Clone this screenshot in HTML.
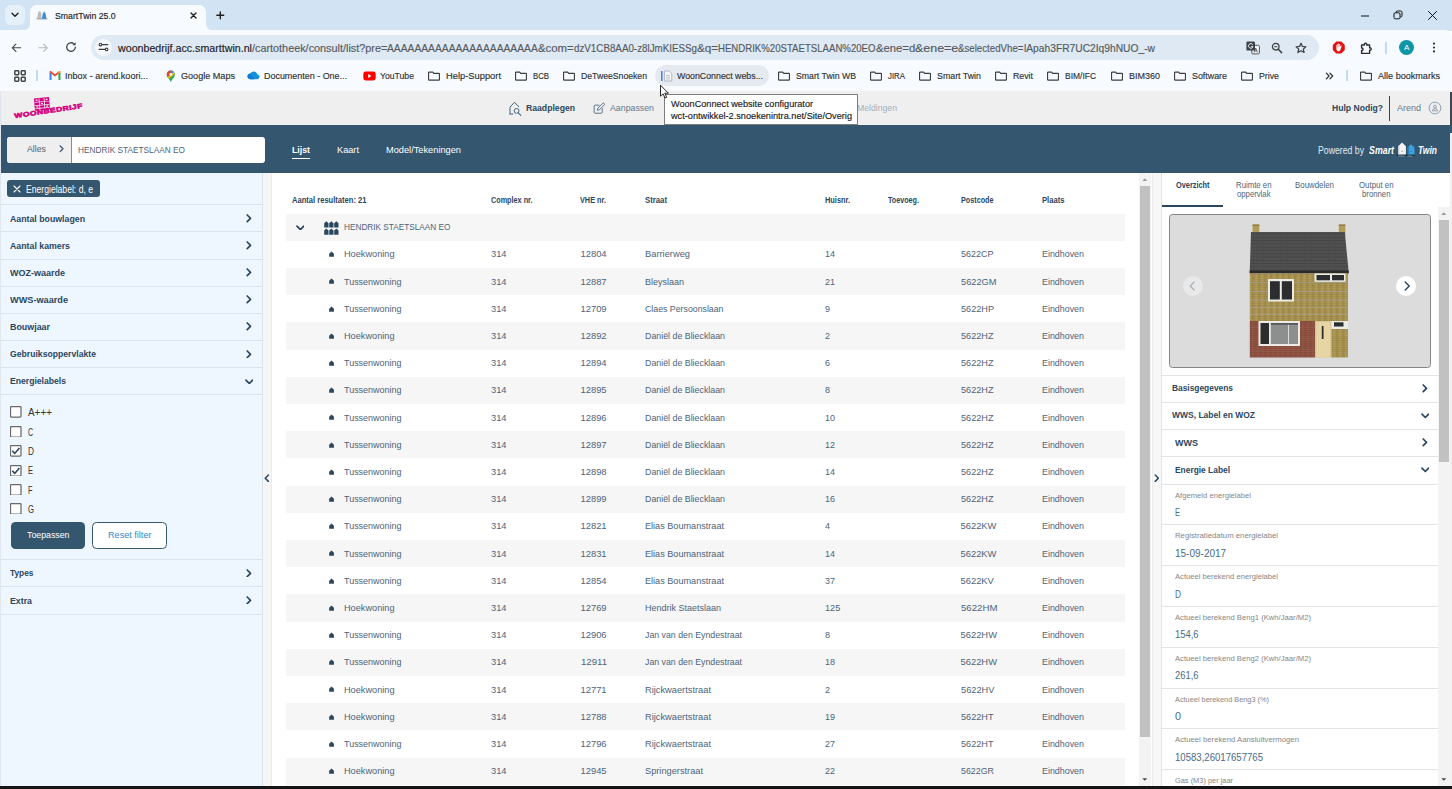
<!DOCTYPE html>
<html lang="nl"><head><meta charset="utf-8"><title>SmartTwin 25.0</title>
<style>
*{box-sizing:border-box}
html,body{margin:0;padding:0}
body{width:1452px;height:789px;overflow:hidden;position:relative;background:#fff;font-family:"Liberation Sans",sans-serif;}
.g{position:absolute;left:0;top:0;width:0;height:0}
.b{position:absolute;display:block}
.t{position:absolute;display:block;white-space:pre;transform-origin:0 50%}

</style></head>
<body>
<div class="g" id="chrome"><div class="b" style="left:0px;top:0px;width:1452px;height:31px;background:#d2e4f3;"></div><div class="b" style="left:5px;top:5px;width:20px;height:20px;background:#e5f0fb;border-radius:6px;"></div><svg class="b" style="left:10px;top:11px;" width="10" height="8" viewBox="0 0 10 8"><path d="M2 2.2l3 3 3-3" fill="none" stroke="#1f1f1f" stroke-width="1.4" stroke-linecap="round" stroke-linejoin="round"/></svg><div class="b" style="left:30px;top:4.6px;width:175.5px;height:26.4px;background:#f7fafe;border-radius:7px 7px 0 0;"></div><svg class="b" style="left:24px;top:24.2px;" width="6" height="6" viewBox="0 0 6 6"><path d="M6 0v6H0c3.3 0 6-2.7 6-6z" fill="#f7fafe"/></svg><svg class="b" style="left:205.5px;top:24.2px;" width="6" height="6" viewBox="0 0 6 6"><path d="M0 0v6h6C2.7 6 0 3.3 0 0z" fill="#f7fafe"/></svg><svg class="b" style="left:36px;top:10px;" width="12" height="10" viewBox="0 0 12 10"><path d="M1 9l1.2-6.5L3.6 1 5 2.5 5.6 9z" fill="#b9bdc2"/><path d="M5.8 9l1-5.6L8.2 1.6l1.3 1.8L10.6 9z" fill="#3d8fd1"/><path d="M.5 9h11" stroke="#8a8f96" stroke-width=".7"/></svg><span class="t" style="left:54.5px;top:10px;font-size:9.4px;line-height:12.2px;color:#202124;transform:scaleX(0.9318);-webkit-text-stroke:.15px;">SmartTwin 25.0</span><svg class="b" style="left:190px;top:12.2px;" width="7" height="7" viewBox="0 0 7 7"><path d="M1 1l5 5M6 1L1 6" stroke="#1f1f1f" stroke-width="1.4" stroke-linecap="round"/></svg><svg class="b" style="left:216.3px;top:11.1px;" width="8.6" height="8.6" viewBox="0 0 10 10"><path d="M5 1v8M1 5h8" stroke="#1f1f1f" stroke-width="1.600" stroke-linecap="round"/></svg><svg class="b" style="left:1360px;top:11px;" width="10" height="10" viewBox="0 0 10 10"><path d="M1 5h8" stroke="#111" stroke-width="1"/></svg><svg class="b" style="left:1393px;top:10px;" width="10" height="10" viewBox="0 0 10 10"><rect x="1" y="2.8" width="6" height="6" rx="1.2" fill="none" stroke="#111" stroke-width="1"/><path d="M3 2.6V2.2c0-.7.5-1.2 1.2-1.2h3.6c.7 0 1.2.5 1.2 1.2v3.6c0 .7-.5 1.2-1.2 1.2h-.4" fill="none" stroke="#111" stroke-width="1"/></svg><svg class="b" style="left:1427px;top:10px;" width="11" height="11" viewBox="0 0 11 11"><path d="M1.2 1.2l8.6 8.6M9.8 1.2L1.2 9.8" stroke="#111" stroke-width="1"/></svg><div class="b" style="left:0px;top:30.2px;width:1452px;height:60.8px;background:#f7fafe;border-radius:0 7px 0 0;"></div><svg class="b" style="left:11.3px;top:42.7px;" width="10.5" height="9.6" viewBox="0 0 12 11"><path d="M11 5.5H1.6M5.6 1.3L1.4 5.5l4.2 4.2" fill="none" stroke="#444746" stroke-width="1.3" stroke-linecap="round" stroke-linejoin="round"/></svg><svg class="b" style="left:38.3px;top:42.7px;" width="10.5" height="9.6" viewBox="0 0 12 11"><path d="M1 5.5h9.4M6.4 1.3l4.2 4.2-4.2 4.2" fill="none" stroke="#b4b8bd" stroke-width="1.3" stroke-linecap="round" stroke-linejoin="round"/></svg><svg class="b" style="left:65px;top:41px;" width="12" height="12" viewBox="0 0 12 12"><path d="M10.3 6.2a4.3 4.3 0 1 1-1.4-3.3" fill="none" stroke="#444746" stroke-width="1.3" stroke-linecap="round"/><path d="M10.6 1.2v3.1H7.5z" fill="#444746"/></svg><div class="b" style="left:91px;top:35px;width:1228px;height:25.299999999999997px;background:#dfe9f3;border-radius:12.6px;"></div><div class="b" style="left:94.6px;top:39px;width:17.60000000000001px;height:17.4px;background:#f5f9fd;border-radius:9px;"></div><svg class="b" style="left:98px;top:42px;" width="11" height="10" viewBox="0 0 11 10"><path d="M4.2 2.6h5.6M1.2 7.4h5.6" stroke="#3c4043" stroke-width="1.2" stroke-linecap="round"/><circle cx="2.4" cy="2.6" r="1.3" fill="none" stroke="#3c4043" stroke-width="1.1"/><circle cx="8.6" cy="7.4" r="1.3" fill="none" stroke="#3c4043" stroke-width="1.1"/></svg><span class="t" style="left:118px;top:42px;font-size:10.6px;line-height:13.8px;color:#202124;transform:scaleX(1.0069);-webkit-text-stroke:.15px;">woonbedrijf.acc.smarttwin.nl</span><span class="t" style="left:252px;top:42px;font-size:10.6px;line-height:13.8px;color:#54595f;transform:scaleX(1.0230);-webkit-text-stroke:.15px;">/cartotheek/consult/list?pre=</span><span class="t" style="left:387.25px;top:42px;font-size:10.6px;line-height:13.8px;color:#54595f;transform:scaleX(0.9697);-webkit-text-stroke:.15px;">AAAAAAAAAAAAAAAAAAAAAA</span><span class="t" style="left:538px;top:42px;font-size:10.6px;line-height:13.8px;color:#54595f;transform:scaleX(1.0742);-webkit-text-stroke:.15px;">&amp;com=</span><span class="t" style="left:573.75px;top:42px;font-size:10.6px;line-height:13.8px;color:#54595f;transform:scaleX(0.9243);-webkit-text-stroke:.15px;">dzV1CB8AA0-z8lJmKIESSg</span><span class="t" style="left:696.75px;top:42px;font-size:10.6px;line-height:13.8px;color:#54595f;transform:scaleX(1.1093);-webkit-text-stroke:.15px;">&amp;q=</span><span class="t" style="left:718px;top:42px;font-size:10.6px;line-height:13.8px;color:#54595f;transform:scaleX(0.9079);-webkit-text-stroke:.15px;">HENDRIK%20STAETSLAAN%20EO</span><span class="t" style="left:875.5px;top:42px;font-size:10.6px;line-height:13.8px;color:#54595f;transform:scaleX(1.0658);-webkit-text-stroke:.15px;">&amp;ene=d</span><span class="t" style="left:914.75px;top:42px;font-size:10.6px;line-height:13.8px;color:#54595f;transform:scaleX(1.1744);-webkit-text-stroke:.15px;">&amp;ene=e</span><span class="t" style="left:958px;top:42px;font-size:10.6px;line-height:13.8px;color:#54595f;transform:scaleX(0.9153);-webkit-text-stroke:.15px;">&amp;selectedVhe=</span><span class="t" style="left:1023.5px;top:42px;font-size:10.6px;line-height:13.8px;color:#54595f;transform:scaleX(0.9672);-webkit-text-stroke:.15px;">lApah3FR7UC2Iq9hNUO_-w</span><svg class="b" style="left:1246px;top:41px;" width="14" height="13.5" viewBox="0 0 14 13.500"><rect x="5.800" y="4.300" width="7.600" height="8.600" rx="1" fill="#f2f6fb" stroke="#50555b" stroke-width="1"/><path d="M8 11.300l1.700-4.300 1.700 4.300M8.600 10h2.200" stroke="#50555b" stroke-width=".9" fill="none"/><rect x=".4" y=".4" width="8.600" height="9.200" rx="1.200" fill="#3f4347"/><path d="M6.700 3.600a2.300 2.300 0 1 0 .3 2.100H4.900" stroke="#e8edf4" stroke-width="1" fill="none"/></svg><svg class="b" style="left:1271px;top:42px;" width="12" height="12" viewBox="0 0 12 12"><circle cx="4.700" cy="4.700" r="3.300" fill="none" stroke="#3c4043" stroke-width="1.300"/><path d="M7.300 7.300l3.300 3.300" stroke="#3c4043" stroke-width="1.500" stroke-linecap="round"/><path d="M3.200 4.700h3" stroke="#3c4043" stroke-width="1"/></svg><svg class="b" style="left:1295px;top:42px;" width="12" height="11.5" viewBox="0 0 14 13"><path d="M7 1.300l1.700 3.700 4 .4-3 2.700.9 3.900L7 10l-3.600 2 .9-3.900-3-2.700 4-.4z" fill="none" stroke="#3c4043" stroke-width="1.500" stroke-linejoin="round"/></svg><svg class="b" style="left:1332px;top:41px;" width="13.6" height="13" viewBox="0 0 15 15"><path d="M4.600 .6h5.800l4 4v5.800l-4 4H4.600l-4-4V4.600z" fill="#e3120f"/><path d="M4.700 8.600V5c0-.8 1.100-.8 1.100 0V3.800c0-.8 1.100-.8 1.100 0V3.400c0-.8 1.100-.8 1.100 0v.6c0-.8 1.100-.8 1.100 0v2.400l.7-.9c.5-.6 1.300 0 .9.700L9.600 9.400c-.5 1.600-1.200 2.500-2.500 2.500-1.500 0-2.400-1.200-2.400-3.300z" fill="#fff"/><path d="M5.800 5v2.400M6.900 4v3.300M8 4v3.300" stroke="#e3120f" stroke-width=".35"/></svg><svg class="b" style="left:1359.5px;top:40.5px;" width="14" height="13.5" viewBox="0 0 14 13.500"><path d="M1.600 4h2.800c-.7-2.300 2.900-2.300 2.200 0h3v2.900c2.100-.7 2.100 2.900 0 2.200v3.300H1.600V9.400c1.900.5 1.900-2.900 0-2.400z" fill="none" stroke="#2b2d30" stroke-width="1.400" stroke-linejoin="round"/></svg><div class="b" style="left:1385.3px;top:42px;width:1.7000000000000455px;height:11.5px;background:#c2dbf5;"></div><div class="b" style="left:1399px;top:40px;width:15px;height:15px;background:#0e95a6;border-radius:50%;"></div><span class="t" style="left:1404px;top:43px;font-size:7.8px;line-height:10.1px;color:#fff;transform:scaleX(1.0378);">A</span><svg class="b" style="left:1432px;top:42px;" width="4" height="11" viewBox="0 0 4 11"><circle cx="2" cy="1.600" r="1.100" fill="#333"/><circle cx="2" cy="5.500" r="1.100" fill="#333"/><circle cx="2" cy="9.400" r="1.100" fill="#333"/></svg><svg class="b" style="left:14px;top:70px;" width="12" height="12" viewBox="0 0 12 12"><g fill="none" stroke="#444746" stroke-width="1.500"><rect x=".8" y=".8" width="3.900" height="3.900" rx=".6"/><rect x="7.300" y=".8" width="3.900" height="3.900" rx=".6"/><rect x=".8" y="7.300" width="3.900" height="3.900" rx=".6"/><rect x="7.300" y="7.300" width="3.900" height="3.900" rx=".6"/></g></svg><div class="b" style="left:36.3px;top:69.8px;width:1.7000000000000028px;height:11.200000000000003px;background:#c2dbf5;"></div><svg class="b" style="left:49px;top:71px;" width="12" height="9" viewBox="0 0 12 9"><path d="M.5 9V1.200L2.600 2.600V9z" fill="#4285f4"/><path d="M11.500 9V1.200L9.400 2.600V9z" fill="#34a853"/><path d="M.5 1.200C.5 .2 1.600-.2 2.400.4L6 3.200 9.600.4c.8-.6 1.900-.2 1.900.8L6 5.600z" fill="#ea4335"/><path d="M9.400 2.600l2.100-1.400c0-1-1.100-1.400-1.900-.8z" fill="#fbbc04"/></svg><svg class="b" style="left:166px;top:69.8px;" width="9.6" height="12.4" viewBox="0 0 10 13"><path d="M5 .5C2.500.5.700 2.300.700 4.700c0 2.900 3.200 5 4.300 7.800 1.100-2.800 4.300-4.900 4.300-7.800C9.300 2.300 7.500.5 5 .5z" fill="#34a853"/><path d="M5 .5C2.500.5.700 2.300.700 4.700c0 1 .4 1.900 1 2.800L5 4.700z" fill="#ea4335"/><path d="M5 .5v4.200l3.300-2.600C7.500 1.100 6.400.5 5 .5z" fill="#4285f4"/><path d="M8.300 2.100L1.700 7.500c.4.600.8 1.100 1.300 1.700l5.900-5c-.1-.8-.3-1.500-.6-2.100z" fill="#fbbc04"/><circle cx="5" cy="4.600" r="1.500" fill="#fff"/></svg><svg class="b" style="left:246.8px;top:71.2px;" width="13" height="8.6" viewBox="0 0 15 10"><path d="M3.400 9.500h8.200c1.600 0 2.900-1.200 2.900-2.700 0-1.400-1.100-2.600-2.500-2.700C11.600 2 9.800.5 7.700.5 6 .5 4.600 1.400 3.900 2.800 2 2.900.5 4.400.5 6.200c0 1.800 1.300 3.300 2.900 3.300z" fill="#1490df"/><path d="M3.900 2.800C2 2.900.5 4.400.5 6.200c0 1.800 1.300 3.300 2.900 3.300h5L3.900 2.800z" fill="#0f78d4"/></svg><svg class="b" style="left:363px;top:71px;" width="13" height="10" viewBox="0 0 13 10"><rect x=".3" y=".5" width="12.400" height="9" rx="2.400" fill="#f00"/><path d="M5.200 3l3.200 2-3.200 2z" fill="#fff"/></svg><div class="b" style="left:655px;top:65px;width:114px;height:21px;background:#e5eaf1;border-radius:10.5px;"></div><svg class="b" style="left:661px;top:70px;" width="12" height="12" viewBox="0 0 12 12"><path d="M.8 1v10" stroke="#3b78d8" stroke-width="1.400"/><path d="M3.400 1h4.800l2.600 2.600V11H3.400z" fill="#f4f6f8" stroke="#aab0b8" stroke-width=".9"/><path d="M5 5.400h4M5 7.200h4M5 9h4" stroke="#b8bec6" stroke-width=".8"/></svg><span class="t" style="left:677px;top:70px;font-size:9.4px;line-height:12.2px;color:#2f3236;transform:scaleX(0.9394);-webkit-text-stroke:.15px;">WoonConnect webs...</span><span class="t" style="left:65px;top:70px;font-size:9.4px;line-height:12.2px;color:#2f3236;transform:scaleX(0.9653);-webkit-text-stroke:.15px;">Inbox - arend.koori...</span><span class="t" style="left:181px;top:70px;font-size:9.4px;line-height:12.2px;color:#2f3236;transform:scaleX(0.9683);-webkit-text-stroke:.15px;">Google Maps</span><span class="t" style="left:264px;top:70px;font-size:9.4px;line-height:12.2px;color:#2f3236;transform:scaleX(0.9537);-webkit-text-stroke:.15px;">Documenten - One...</span><span class="t" style="left:380px;top:70px;font-size:9.4px;line-height:12.2px;color:#2f3236;transform:scaleX(0.9228);-webkit-text-stroke:.15px;">YouTube</span><span class="t" style="left:446px;top:70px;font-size:9.4px;line-height:12.2px;color:#2f3236;transform:scaleX(0.9955);-webkit-text-stroke:.15px;">Help-Support</span><span class="t" style="left:533px;top:70px;font-size:9.4px;line-height:12.2px;color:#2f3236;transform:scaleX(0.8298);-webkit-text-stroke:.15px;">BCB</span><span class="t" style="left:581px;top:70px;font-size:9.4px;line-height:12.2px;color:#2f3236;transform:scaleX(0.9243);-webkit-text-stroke:.15px;">DeTweeSnoeken</span><span class="t" style="left:796px;top:70px;font-size:9.4px;line-height:12.2px;color:#2f3236;transform:scaleX(0.9314);-webkit-text-stroke:.15px;">Smart Twin WB</span><span class="t" style="left:888px;top:70px;font-size:9.4px;line-height:12.2px;color:#2f3236;transform:scaleX(0.8363);-webkit-text-stroke:.15px;">JIRA</span><span class="t" style="left:937px;top:70px;font-size:9.4px;line-height:12.2px;color:#2f3236;transform:scaleX(0.9418);-webkit-text-stroke:.15px;">Smart Twin</span><span class="t" style="left:1013px;top:70px;font-size:9.4px;line-height:12.2px;color:#2f3236;transform:scaleX(0.9364);-webkit-text-stroke:.15px;">Revit</span><span class="t" style="left:1065px;top:70px;font-size:9.4px;line-height:12.2px;color:#2f3236;transform:scaleX(0.9018);-webkit-text-stroke:.15px;">BIM/IFC</span><span class="t" style="left:1129px;top:70px;font-size:9.4px;line-height:12.2px;color:#2f3236;transform:scaleX(0.9594);-webkit-text-stroke:.15px;">BIM360</span><span class="t" style="left:1192px;top:70px;font-size:9.4px;line-height:12.2px;color:#2f3236;transform:scaleX(0.9459);-webkit-text-stroke:.15px;">Software</span><span class="t" style="left:1259px;top:70px;font-size:9.4px;line-height:12.2px;color:#2f3236;transform:scaleX(0.9364);-webkit-text-stroke:.15px;">Prive</span><span class="t" style="left:1378px;top:70px;font-size:9.4px;line-height:12.2px;color:#2f3236;transform:scaleX(0.9673);-webkit-text-stroke:.15px;">Alle bookmarks</span><svg class="b" style="left:428px;top:70.5px;" width="12" height="10" viewBox="0 0 12 10"><path d="M1.2 1h3.4l1.2 1.3h5c.4 0 .7.3.7.7v5.3c0 .4-.3.7-.7.7H1.2c-.4 0-.7-.3-.7-.7V1.7c0-.4.3-.7.7-.7z" fill="none" stroke="#3c4043" stroke-width="1.25"/></svg><svg class="b" style="left:515px;top:70.5px;" width="12" height="10" viewBox="0 0 12 10"><path d="M1.2 1h3.4l1.2 1.3h5c.4 0 .7.3.7.7v5.3c0 .4-.3.7-.7.7H1.2c-.4 0-.7-.3-.7-.7V1.7c0-.4.3-.7.7-.7z" fill="none" stroke="#3c4043" stroke-width="1.25"/></svg><svg class="b" style="left:563px;top:70.5px;" width="12" height="10" viewBox="0 0 12 10"><path d="M1.2 1h3.4l1.2 1.3h5c.4 0 .7.3.7.7v5.3c0 .4-.3.7-.7.7H1.2c-.4 0-.7-.3-.7-.7V1.7c0-.4.3-.7.7-.7z" fill="none" stroke="#3c4043" stroke-width="1.25"/></svg><svg class="b" style="left:778px;top:70.5px;" width="12" height="10" viewBox="0 0 12 10"><path d="M1.2 1h3.4l1.2 1.3h5c.4 0 .7.3.7.7v5.3c0 .4-.3.7-.7.7H1.2c-.4 0-.7-.3-.7-.7V1.7c0-.4.3-.7.7-.7z" fill="none" stroke="#3c4043" stroke-width="1.25"/></svg><svg class="b" style="left:870px;top:70.5px;" width="12" height="10" viewBox="0 0 12 10"><path d="M1.2 1h3.4l1.2 1.3h5c.4 0 .7.3.7.7v5.3c0 .4-.3.7-.7.7H1.2c-.4 0-.7-.3-.7-.7V1.7c0-.4.3-.7.7-.7z" fill="none" stroke="#3c4043" stroke-width="1.25"/></svg><svg class="b" style="left:919px;top:70.5px;" width="12" height="10" viewBox="0 0 12 10"><path d="M1.2 1h3.4l1.2 1.3h5c.4 0 .7.3.7.7v5.3c0 .4-.3.7-.7.7H1.2c-.4 0-.7-.3-.7-.7V1.7c0-.4.3-.7.7-.7z" fill="none" stroke="#3c4043" stroke-width="1.25"/></svg><svg class="b" style="left:995px;top:70.5px;" width="12" height="10" viewBox="0 0 12 10"><path d="M1.2 1h3.4l1.2 1.3h5c.4 0 .7.3.7.7v5.3c0 .4-.3.7-.7.7H1.2c-.4 0-.7-.3-.7-.7V1.7c0-.4.3-.7.7-.7z" fill="none" stroke="#3c4043" stroke-width="1.25"/></svg><svg class="b" style="left:1047px;top:70.5px;" width="12" height="10" viewBox="0 0 12 10"><path d="M1.2 1h3.4l1.2 1.3h5c.4 0 .7.3.7.7v5.3c0 .4-.3.7-.7.7H1.2c-.4 0-.7-.3-.7-.7V1.7c0-.4.3-.7.7-.7z" fill="none" stroke="#3c4043" stroke-width="1.25"/></svg><svg class="b" style="left:1111px;top:70.5px;" width="12" height="10" viewBox="0 0 12 10"><path d="M1.2 1h3.4l1.2 1.3h5c.4 0 .7.3.7.7v5.3c0 .4-.3.7-.7.7H1.2c-.4 0-.7-.3-.7-.7V1.7c0-.4.3-.7.7-.7z" fill="none" stroke="#3c4043" stroke-width="1.25"/></svg><svg class="b" style="left:1174px;top:70.5px;" width="12" height="10" viewBox="0 0 12 10"><path d="M1.2 1h3.4l1.2 1.3h5c.4 0 .7.3.7.7v5.3c0 .4-.3.7-.7.7H1.2c-.4 0-.7-.3-.7-.7V1.7c0-.4.3-.7.7-.7z" fill="none" stroke="#3c4043" stroke-width="1.25"/></svg><svg class="b" style="left:1241px;top:70.5px;" width="12" height="10" viewBox="0 0 12 10"><path d="M1.2 1h3.4l1.2 1.3h5c.4 0 .7.3.7.7v5.3c0 .4-.3.7-.7.7H1.2c-.4 0-.7-.3-.7-.7V1.7c0-.4.3-.7.7-.7z" fill="none" stroke="#3c4043" stroke-width="1.25"/></svg><svg class="b" style="left:1360px;top:70.5px;" width="12" height="10" viewBox="0 0 12 10"><path d="M1.2 1h3.4l1.2 1.3h5c.4 0 .7.3.7.7v5.3c0 .4-.3.7-.7.7H1.2c-.4 0-.7-.3-.7-.7V1.7c0-.4.3-.7.7-.7z" fill="none" stroke="#3c4043" stroke-width="1.25"/></svg><svg class="b" style="left:1325px;top:72px;" width="9" height="8" viewBox="0 0 10 9"><path d="M1.500 1.300l3 3.200-3 3.200M5.500 1.300l3 3.200-3 3.200" fill="none" stroke="#333" stroke-width="1.500" stroke-linecap="round" stroke-linejoin="round"/></svg><div class="b" style="left:1346.4px;top:70px;width:1.699999999999818px;height:11.299999999999997px;background:#c2dbf5;"></div></div><div class="g" id="appheader"><div class="b" style="left:0px;top:91px;width:1452px;height:34px;background:#efefef;"></div><svg class="b" style="left:13px;top:95px;" width="76" height="28" viewBox="0 0 76 28"><g transform="translate(0 1.2) rotate(-5 29 8)"><rect x="21.500" y="1.500" width="15" height="12.300" fill="#d6007f"/><g fill="#efefef"><rect x="26.100" y="2" width=".8" height="12"/><rect x="31.100" y="2" width=".8" height="12"/><rect x="22" y="5.300" width="14" height=".7"/><rect x="22" y="8.400" width="14" height=".7"/><rect x="22" y="11.400" width="14" height=".7"/><rect x="23" y="3" width="2" height="1.300"/><rect x="33" y="3" width="2" height="1.300"/><rect x="28" y="6.600" width="2" height="1.200"/><rect x="23" y="9.700" width="2" height="1.200"/><rect x="33" y="9.700" width="2" height="1.200"/></g></g><text x="0" y="0" transform="translate(1.700 23.300) rotate(-8.700) scale(1.300 1)" font-family="Liberation Sans" font-weight="700" font-size="6.600" fill="#d6007f" stroke="#d6007f" stroke-width=".55" letter-spacing=".35">WOONBEDRIJF</text></svg><svg class="b" style="left:508px;top:100px;" width="14" height="17" viewBox="0 0 14 17"><path d="M2 14V7.200L6.500 2.200l4.300 4.600" fill="none" stroke="#48657f" stroke-width="1" stroke-linejoin="round" stroke-linecap="round"/><path d="M2 14h3" stroke="#48657f" stroke-width="1" stroke-linecap="round"/><circle cx="8.600" cy="10.900" r="2.400" fill="none" stroke="#48657f" stroke-width="1"/><path d="M10.400 12.800l2.400 2.500" stroke="#48657f" stroke-width="1.100" stroke-linecap="round"/></svg><span class="t" style="left:526px;top:102px;font-size:9.4px;line-height:12.2px;color:#2b4760;font-weight:700;transform:scaleX(0.9221);">Raadplegen</span><svg class="b" style="left:593px;top:102px;" width="12.3" height="12.3" viewBox="0 0 14 14"><path d="M10.500 7.500v4.300c0 .6-.4 1-1 1H2.300c-.6 0-1-.4-1-1V4.600c0-.6.400-1 1-1h4.500" fill="none" stroke="#587087" stroke-width="1.100" stroke-linecap="round"/><path d="M5 9.400l.5-2.300 5.600-5.600c.4-.4 1-.4 1.400 0l.4.400c.4.400.4 1 0 1.400L7.300 8.900z" fill="none" stroke="#587087" stroke-width="1.100" stroke-linejoin="round"/></svg><span class="t" style="left:610px;top:102px;font-size:9.4px;line-height:12.2px;color:#64798d;transform:scaleX(0.9377);">Aanpassen</span><span class="t" style="left:857px;top:102px;font-size:9.4px;line-height:12.2px;color:#a3afba;transform:scaleX(0.9245);">Meldingen</span><div class="b" style="left:664px;top:94px;width:194px;height:31px;background:#fff;border:1px solid #7d7d7d;"></div><span class="t" style="left:671px;top:98px;font-size:9.4px;line-height:12.2px;color:#202124;transform:scaleX(0.9743);-webkit-text-stroke:.15px;">WoonConnect website configurator</span><span class="t" style="left:671px;top:110px;font-size:9.4px;line-height:12.2px;color:#202124;transform:scaleX(0.9785);-webkit-text-stroke:.15px;">wct-ontwikkel-2.snoekenintra.net/Site/Overig</span><svg class="b" style="left:659px;top:84px;" width="12" height="16" viewBox="0 0 12 16"><path d="M1.500 1.200v11l2.600-2.400 1.900 4.300 1.700-.8-1.900-4.100h3.600z" fill="#fff" stroke="#111" stroke-width=".9" stroke-linejoin="round"/></svg><span class="t" style="left:1332px;top:102px;font-size:9.4px;line-height:12.2px;color:#2b4760;font-weight:700;transform:scaleX(0.9153);">Hulp Nodig?</span><div class="b" style="left:1388.5px;top:96px;width:1.5px;height:25px;background:#2b4760;"></div><span class="t" style="left:1397px;top:102px;font-size:9.4px;line-height:12.2px;color:#64798d;transform:scaleX(0.9588);">Arend</span><svg class="b" style="left:1428px;top:101px;" width="14" height="14" viewBox="0 0 14 14"><circle cx="7" cy="7" r="5.900" fill="none" stroke="#8596a6" stroke-width=".9"/><circle cx="7" cy="5.600" r="1.400" fill="none" stroke="#8596a6" stroke-width=".9"/><path d="M4.400 9.800c.2-1.500 1.200-2.200 2.600-2.200s2.400.7 2.600 2.200z" fill="none" stroke="#8596a6" stroke-width=".9"/></svg><div class="b" style="left:1450px;top:92px;width:2px;height:40.69999999999999px;background:#3d4852;"></div></div><div class="g" id="darkbar"><div class="b" style="left:0px;top:125px;width:1452px;height:47.5px;background:#35566f;"></div><div class="b" style="left:7px;top:137px;width:258px;height:26px;background:#fff;border-radius:3px;overflow:hidden;"><div class="b" style="left:0px;top:0px;width:64.5px;height:26px;background:#efefef;border-right:1px solid #8b8b8b;"></div></div><span class="t" style="left:27px;top:143px;font-size:9.4px;line-height:12.2px;color:#55606b;transform:scaleX(0.9347);">Alles</span><svg class="b" style="left:59.3px;top:145.0px;" width="5.3" height="7.6" viewBox="0 0 5.30 7.60"><path d="M1.200 1l2.80 2.80-2.80 2.80" fill="none" stroke="#3f566b" stroke-width="1.3" stroke-linecap="round" stroke-linejoin="round"/></svg><span class="t" style="left:78px;top:144px;font-size:9.4px;line-height:12.2px;color:#4d6379;transform:scaleX(0.8827);">HENDRIK STAETSLAAN EO</span><span class="t" style="left:292px;top:144px;font-size:9.4px;line-height:12.2px;color:#fff;font-weight:700;transform:scaleX(0.9335);">Lijst</span><div class="b" style="left:292px;top:157.5px;width:18px;height:1.5px;background:#fff;"></div><span class="t" style="left:337px;top:144px;font-size:9.4px;line-height:12.2px;color:#fff;transform:scaleX(0.9812);">Kaart</span><span class="t" style="left:386px;top:144px;font-size:9.4px;line-height:12.2px;color:#fff;transform:scaleX(0.9856);">Model/Tekeningen</span><span class="t" style="left:1318px;top:144px;font-size:10.0px;line-height:13.0px;color:#e4eaf0;transform:scaleX(0.8710);">Powered by</span><span class="t" style="left:1369px;top:144px;font-size:10.6px;line-height:13.8px;color:#fff;font-weight:700;font-style:italic;transform:scaleX(0.8325);">Smart</span><svg class="b" style="left:1396px;top:141.5px;" width="20" height="15" viewBox="0 0 20 15"><path d="M.6 13.600l2-1.600h5l2.400 1.800M9.800 13.800l2-1.600h4l2.800 1.800" stroke="#1c2a36" stroke-width="1.300" fill="none"/><path d="M2.200 12.600V4.300L6 .6l3.900 3.700v8.300z" fill="#f4f5f6"/><path d="M2.200 12.600V4.300L3.400 3.200v9.400z" fill="#c9ced3"/><path d="M5 9.200h2.400" stroke="#9aa3ad" stroke-width=".8"/><path d="M11.600 12.600V5.400L15 2.200l3.500 3.200v7.200z" fill="#3fa3e0"/><path d="M11.600 12.600V5.400l1.100-1v8.200z" fill="#1f6fae"/><path d="M13.800 9.400h2.400M14 6.600h.6M16 6.600h.6" stroke="#2a7fc0" stroke-width=".7"/><path d="M2.500 14.300h6M11.500 14.300h5" stroke="#8fa3b5" stroke-width=".5"/></svg><span class="t" style="left:1418px;top:144px;font-size:10.6px;line-height:13.8px;color:#fff;font-weight:700;font-style:italic;transform:scaleX(0.8005);">Twin</span></div><div class="g" id="sidebar"><div class="b" style="left:1450.2px;top:132.7px;width:1.7999999999999545px;height:653.3px;background:#f1f1f1;"></div><div class="b" style="left:0px;top:172.5px;width:263px;height:613.5px;background:#eef6ff;border-right:1px solid #dde3ea;"></div><div class="b" style="left:263px;top:172.5px;width:9px;height:613.5px;background:#f6f6f6;border-right:1px solid #ececec;"></div><div class="b" style="left:7px;top:180px;width:93px;height:17.30000000000001px;background:#35566f;border-radius:3px;"></div><svg class="b" style="left:13px;top:185px;" width="8" height="8" viewBox="0 0 8 8"><path d="M1 1l6 6M7 1L1 7" stroke="#fff" stroke-width="1.100" stroke-linecap="round"/></svg><span class="t" style="left:26px;top:183px;font-size:10px;line-height:13.0px;color:#fff;transform:scaleX(0.8607);">Energielabel: d, e</span><div class="b" style="left:0px;top:204.3px;width:262px;height:1.0px;background:#dbe4ed;"></div><span class="t" style="left:10px;top:213px;font-size:9.4px;line-height:12.2px;color:#2b4760;font-weight:700;transform:scaleX(0.9349);">Aantal bouwlagen</span><svg class="b" style="left:246px;top:214.0px;" width="5.8" height="8.6" viewBox="0 0 5.80 8.60"><path d="M1.200 1l3.30 3.30-3.30 3.30" fill="none" stroke="#2b4760" stroke-width="1.7" stroke-linecap="round" stroke-linejoin="round"/></svg><div class="b" style="left:0px;top:231.4px;width:262px;height:1.0px;background:#dbe4ed;"></div><span class="t" style="left:10px;top:240px;font-size:9.4px;line-height:12.2px;color:#2b4760;font-weight:700;transform:scaleX(0.9359);">Aantal kamers</span><svg class="b" style="left:246px;top:241.1px;" width="5.8" height="8.6" viewBox="0 0 5.80 8.60"><path d="M1.200 1l3.30 3.30-3.30 3.30" fill="none" stroke="#2b4760" stroke-width="1.7" stroke-linecap="round" stroke-linejoin="round"/></svg><div class="b" style="left:0px;top:258.5px;width:262px;height:1.0px;background:#dbe4ed;"></div><span class="t" style="left:10px;top:267px;font-size:9.4px;line-height:12.2px;color:#2b4760;font-weight:700;transform:scaleX(0.9597);">WOZ-waarde</span><svg class="b" style="left:246px;top:268.2px;" width="5.8" height="8.6" viewBox="0 0 5.80 8.60"><path d="M1.200 1l3.30 3.30-3.30 3.30" fill="none" stroke="#2b4760" stroke-width="1.7" stroke-linecap="round" stroke-linejoin="round"/></svg><div class="b" style="left:0px;top:285.6px;width:262px;height:1.0px;background:#dbe4ed;"></div><span class="t" style="left:10px;top:294px;font-size:9.4px;line-height:12.2px;color:#2b4760;font-weight:700;transform:scaleX(0.9766);">WWS-waarde</span><svg class="b" style="left:246px;top:295.3px;" width="5.8" height="8.6" viewBox="0 0 5.80 8.60"><path d="M1.200 1l3.30 3.30-3.30 3.30" fill="none" stroke="#2b4760" stroke-width="1.7" stroke-linecap="round" stroke-linejoin="round"/></svg><div class="b" style="left:0px;top:312.70000000000005px;width:262px;height:1.0px;background:#dbe4ed;"></div><span class="t" style="left:10px;top:321px;font-size:9.4px;line-height:12.2px;color:#2b4760;font-weight:700;transform:scaleX(0.9478);">Bouwjaar</span><svg class="b" style="left:246px;top:322.40000000000003px;" width="5.8" height="8.6" viewBox="0 0 5.80 8.60"><path d="M1.200 1l3.30 3.30-3.30 3.30" fill="none" stroke="#2b4760" stroke-width="1.7" stroke-linecap="round" stroke-linejoin="round"/></svg><div class="b" style="left:0px;top:339.8px;width:262px;height:1.0px;background:#dbe4ed;"></div><span class="t" style="left:10px;top:348px;font-size:9.4px;line-height:12.2px;color:#2b4760;font-weight:700;transform:scaleX(0.9221);">Gebruiksoppervlakte</span><svg class="b" style="left:246px;top:349.5px;" width="5.8" height="8.6" viewBox="0 0 5.80 8.60"><path d="M1.200 1l3.30 3.30-3.30 3.30" fill="none" stroke="#2b4760" stroke-width="1.7" stroke-linecap="round" stroke-linejoin="round"/></svg><div class="b" style="left:0px;top:366.90000000000003px;width:262px;height:1.0px;background:#dbe4ed;"></div><span class="t" style="left:10px;top:375px;font-size:9.4px;line-height:12.2px;color:#2b4760;font-weight:700;transform:scaleX(0.9185);">Energielabels</span><svg class="b" style="left:244.6px;top:378.55000000000007px;" width="8.6" height="5.8" viewBox="0 0 8.60 5.80"><path d="M1 1.200l3.30 3.30 3.30-3.30" fill="none" stroke="#2b4760" stroke-width="1.7" stroke-linecap="round" stroke-linejoin="round"/></svg><div class="b" style="left:0px;top:394.0px;width:262px;height:1.0px;background:#dbe4ed;"></div><svg class="b" style="left:10.2px;top:406.25px;" width="11.5" height="11.5" viewBox="0 0 11.500 11.500"><rect x=".5" y=".5" width="10.500" height="10.500" rx="1" fill="#fff" stroke="#6a6a6a" stroke-width="1.25"/></svg><span class="t" style="left:28px;top:406px;font-size:10.6px;line-height:13.8px;color:#333;transform:scaleX(0.9360);">A+++</span><svg class="b" style="left:10.2px;top:425.75px;" width="11.5" height="11.5" viewBox="0 0 11.500 11.500"><rect x=".5" y=".5" width="10.500" height="10.500" rx="1" fill="#fff" stroke="#6a6a6a" stroke-width="1.25"/></svg><span class="t" style="left:28px;top:426px;font-size:10.6px;line-height:13.8px;color:#333;transform:scaleX(0.6531);">C</span><svg class="b" style="left:10.2px;top:445.0px;" width="11.5" height="11.5" viewBox="0 0 11.500 11.500"><rect x=".5" y=".5" width="10.500" height="10.500" rx="1" fill="#fff" stroke="#6a6a6a" stroke-width="1.25"/><path d="M2.300 5.900l2.500 2.500 4.600-5.400" fill="none" stroke="#2b4760" stroke-width="1.600"/></svg><span class="t" style="left:28px;top:445px;font-size:10.6px;line-height:13.8px;color:#333;transform:scaleX(0.7837);">D</span><svg class="b" style="left:10.2px;top:464.5px;" width="11.5" height="11.5" viewBox="0 0 11.500 11.500"><rect x=".5" y=".5" width="10.500" height="10.500" rx="1" fill="#fff" stroke="#6a6a6a" stroke-width="1.25"/><path d="M2.300 5.900l2.500 2.500 4.600-5.400" fill="none" stroke="#2b4760" stroke-width="1.600"/></svg><span class="t" style="left:28px;top:464px;font-size:10.6px;line-height:13.8px;color:#333;transform:scaleX(0.7064);">E</span><svg class="b" style="left:10.2px;top:483.75px;" width="11.5" height="11.5" viewBox="0 0 11.500 11.500"><rect x=".5" y=".5" width="10.500" height="10.500" rx="1" fill="#fff" stroke="#6a6a6a" stroke-width="1.25"/></svg><span class="t" style="left:28px;top:484px;font-size:10.6px;line-height:13.8px;color:#333;transform:scaleX(0.6940);">F</span><svg class="b" style="left:10.2px;top:502.85px;" width="11.5" height="11.5" viewBox="0 0 11.500 11.500"><rect x=".5" y=".5" width="10.500" height="10.500" rx="1" fill="#fff" stroke="#6a6a6a" stroke-width="1.25"/></svg><span class="t" style="left:28px;top:503px;font-size:10.6px;line-height:13.8px;color:#333;transform:scaleX(0.7273);">G</span><div class="b" style="left:10.6px;top:521.5px;width:74.60000000000001px;height:27.200000000000045px;background:#35566f;border-radius:4.500px;"></div><span class="t" style="left:26.5px;top:529px;font-size:9.4px;line-height:12.2px;color:#fff;transform:scaleX(0.9370);">Toepassen</span><div class="b" style="left:92.3px;top:521.5px;width:74.7px;height:27.200000000000045px;background:#fff;border-radius:4.500px;border:1px solid #35566f;"></div><span class="t" style="left:107.5px;top:529px;font-size:9.4px;line-height:12.2px;color:#3a86c8;transform:scaleX(0.9707);">Reset filter</span><div class="b" style="left:0px;top:559.2px;width:262px;height:1.0px;background:#dbe4ed;"></div><span class="t" style="left:10px;top:567px;font-size:9.4px;line-height:12.2px;color:#2b4760;font-weight:700;transform:scaleX(0.8899);">Types</span><svg class="b" style="left:246px;top:568.6000000000001px;" width="5.8" height="8.6" viewBox="0 0 5.80 8.60"><path d="M1.200 1l3.30 3.30-3.30 3.30" fill="none" stroke="#2b4760" stroke-width="1.7" stroke-linecap="round" stroke-linejoin="round"/></svg><div class="b" style="left:0px;top:586.35px;width:262px;height:1.0px;background:#dbe4ed;"></div><span class="t" style="left:10px;top:595px;font-size:9.4px;line-height:12.2px;color:#2b4760;font-weight:700;transform:scaleX(0.9380);">Extra</span><svg class="b" style="left:246px;top:595.7500000000001px;" width="5.8" height="8.6" viewBox="0 0 5.80 8.60"><path d="M1.200 1l3.30 3.30-3.30 3.30" fill="none" stroke="#2b4760" stroke-width="1.7" stroke-linecap="round" stroke-linejoin="round"/></svg><div class="b" style="left:0px;top:613.5px;width:262px;height:1.0px;background:#dbe4ed;"></div><svg class="b" style="left:264.3px;top:473.8px;" width="5.7" height="8.4" viewBox="0 0 5.70 8.40"><path d="M4.40 1l-3.20 3.20 3.20 3.20" fill="none" stroke="#2b4760" stroke-width="1.5" stroke-linecap="round" stroke-linejoin="round"/></svg></div><div class="g" id="table"><span class="t" style="left:292px;top:195px;font-size:8.3px;line-height:10.8px;color:#2b4760;font-weight:700;transform:scaleX(0.9127);">Aantal resultaten: 21</span><span class="t" style="left:490.5px;top:195px;font-size:8.3px;line-height:10.8px;color:#2b4760;font-weight:700;transform:scaleX(0.8737);">Complex nr.</span><span class="t" style="left:580px;top:195px;font-size:8.3px;line-height:10.8px;color:#2b4760;font-weight:700;transform:scaleX(0.8809);">VHE nr.</span><span class="t" style="left:645px;top:195px;font-size:8.3px;line-height:10.8px;color:#2b4760;font-weight:700;transform:scaleX(0.9349);">Straat</span><span class="t" style="left:825px;top:195px;font-size:8.3px;line-height:10.8px;color:#2b4760;font-weight:700;transform:scaleX(0.8889);">Huisnr.</span><span class="t" style="left:888px;top:195px;font-size:8.3px;line-height:10.8px;color:#2b4760;font-weight:700;transform:scaleX(0.8656);">Toevoeg.</span><span class="t" style="left:960.5px;top:195px;font-size:8.3px;line-height:10.8px;color:#2b4760;font-weight:700;transform:scaleX(0.8699);">Postcode</span><span class="t" style="left:1041.5px;top:195px;font-size:8.3px;line-height:10.8px;color:#2b4760;font-weight:700;transform:scaleX(0.9201);">Plaats</span><div class="b" style="left:285.5px;top:213.6px;width:839.5px;height:27.19999999999999px;background:#f6f6f6;"></div><svg class="b" style="left:295.5px;top:224.5px;" width="8.8" height="5.9" viewBox="0 0 8.80 5.90"><path d="M1 1.200l3.40 3.40 3.40-3.40" fill="none" stroke="#2b4760" stroke-width="1.7" stroke-linecap="round" stroke-linejoin="round"/></svg><svg class="b" style="left:324.3px;top:220.5px;" width="15" height="14" viewBox="0 0 15 14"><path d="M0.2 6.5V2.3l2.15-2.100 2.150 2.100v4.200z" fill="#2b4760"/><path d="M5.2 6.5V2.3l2.15-2.100 2.150 2.100v4.200z" fill="#2b4760"/><path d="M10.2 6.5V2.3l2.15-2.100 2.150 2.100v4.200z" fill="#2b4760"/><path d="M0.2 13.7V9.5l2.15-2.100 2.150 2.100v4.200z" fill="#2b4760"/><path d="M5.2 13.7V9.5l2.15-2.100 2.150 2.100v4.200z" fill="#2b4760"/><path d="M10.2 13.7V9.5l2.15-2.100 2.150 2.100v4.200z" fill="#2b4760"/></svg><span class="t" style="left:343.5px;top:221px;font-size:9.4px;line-height:12.2px;color:#4d6479;transform:scaleX(0.8786);">HENDRIK STAETSLAAN EO</span><svg class="b" style="left:328.6px;top:251.2px;" width="5.2" height="6.2" viewBox="0 0 6 6.6"><path d="M.2 6.400V2.900l2.750-2.700L5.700 2.900v3.500z" fill="#2b4760"/></svg><span class="t" style="left:343.5px;top:248px;font-size:9.4px;line-height:12.2px;color:#4d6479;transform:scaleX(0.9785);">Hoekwoning</span><span class="t" style="left:491px;top:248px;font-size:9.4px;line-height:12.2px;color:#4d6479;transform:scaleX(0.9900);">314</span><span class="t" style="left:580.5px;top:248px;font-size:9.4px;line-height:12.2px;color:#4d6479;">12804</span><span class="t" style="left:645px;top:248px;font-size:9.4px;line-height:12.2px;color:#4d6479;transform:scaleX(0.9928);">Barrierweg</span><span class="t" style="left:825.3px;top:248px;font-size:9.4px;line-height:12.2px;color:#4d6479;transform:scaleX(0.9581);">14</span><span class="t" style="left:960.5px;top:248px;font-size:9.4px;line-height:12.2px;color:#4d6479;transform:scaleX(0.9590);">5622CP</span><span class="t" style="left:1041.5px;top:248px;font-size:9.4px;line-height:12.2px;color:#4d6479;transform:scaleX(0.9478);">Eindhoven</span><div class="b" style="left:285.5px;top:268.0px;width:839.5px;height:27.19999999999999px;background:#f6f6f6;"></div><svg class="b" style="left:328.6px;top:278.4px;" width="5.2" height="6.2" viewBox="0 0 6 6.6"><path d="M.2 6.400V2.900l2.750-2.700L5.700 2.900v3.500z" fill="#2b4760"/></svg><span class="t" style="left:343.5px;top:276px;font-size:9.4px;line-height:12.2px;color:#4d6479;transform:scaleX(0.9566);">Tussenwoning</span><span class="t" style="left:491px;top:276px;font-size:9.4px;line-height:12.2px;color:#4d6479;transform:scaleX(0.9900);">314</span><span class="t" style="left:580.5px;top:276px;font-size:9.4px;line-height:12.2px;color:#4d6479;">12887</span><span class="t" style="left:645px;top:276px;font-size:9.4px;line-height:12.2px;color:#4d6479;transform:scaleX(0.9593);">Bleyslaan</span><span class="t" style="left:825.3px;top:276px;font-size:9.4px;line-height:12.2px;color:#4d6479;transform:scaleX(0.9581);">21</span><span class="t" style="left:960.5px;top:276px;font-size:9.4px;line-height:12.2px;color:#4d6479;transform:scaleX(0.9870);">5622GM</span><span class="t" style="left:1041.5px;top:276px;font-size:9.4px;line-height:12.2px;color:#4d6479;transform:scaleX(0.9478);">Eindhoven</span><svg class="b" style="left:328.6px;top:305.59999999999997px;" width="5.2" height="6.2" viewBox="0 0 6 6.6"><path d="M.2 6.400V2.900l2.750-2.700L5.700 2.900v3.500z" fill="#2b4760"/></svg><span class="t" style="left:343.5px;top:303px;font-size:9.4px;line-height:12.2px;color:#4d6479;transform:scaleX(0.9566);">Tussenwoning</span><span class="t" style="left:491px;top:303px;font-size:9.4px;line-height:12.2px;color:#4d6479;transform:scaleX(0.9900);">314</span><span class="t" style="left:580.5px;top:303px;font-size:9.4px;line-height:12.2px;color:#4d6479;">12709</span><span class="t" style="left:645px;top:303px;font-size:9.4px;line-height:12.2px;color:#4d6479;transform:scaleX(0.9356);">Claes Persoonslaan</span><span class="t" style="left:825.3px;top:303px;font-size:9.4px;line-height:12.2px;color:#4d6479;transform:scaleX(0.9581);">9</span><span class="t" style="left:960.5px;top:303px;font-size:9.4px;line-height:12.2px;color:#4d6479;transform:scaleX(0.9737);">5622HP</span><span class="t" style="left:1041.5px;top:303px;font-size:9.4px;line-height:12.2px;color:#4d6479;transform:scaleX(0.9478);">Eindhoven</span><div class="b" style="left:285.5px;top:322.4px;width:839.5px;height:27.200000000000045px;background:#f6f6f6;"></div><svg class="b" style="left:328.6px;top:332.79999999999995px;" width="5.2" height="6.2" viewBox="0 0 6 6.6"><path d="M.2 6.400V2.900l2.750-2.700L5.700 2.900v3.500z" fill="#2b4760"/></svg><span class="t" style="left:343.5px;top:330px;font-size:9.4px;line-height:12.2px;color:#4d6479;transform:scaleX(0.9785);">Hoekwoning</span><span class="t" style="left:491px;top:330px;font-size:9.4px;line-height:12.2px;color:#4d6479;transform:scaleX(0.9900);">314</span><span class="t" style="left:580.5px;top:330px;font-size:9.4px;line-height:12.2px;color:#4d6479;">12892</span><span class="t" style="left:645px;top:330px;font-size:9.4px;line-height:12.2px;color:#4d6479;transform:scaleX(0.9417);">Daniël de Bliecklaan</span><span class="t" style="left:825.3px;top:330px;font-size:9.4px;line-height:12.2px;color:#4d6479;transform:scaleX(0.9581);">2</span><span class="t" style="left:960.5px;top:330px;font-size:9.4px;line-height:12.2px;color:#4d6479;transform:scaleX(0.9742);">5622HZ</span><span class="t" style="left:1041.5px;top:330px;font-size:9.4px;line-height:12.2px;color:#4d6479;transform:scaleX(0.9478);">Eindhoven</span><svg class="b" style="left:328.6px;top:360.0px;" width="5.2" height="6.2" viewBox="0 0 6 6.6"><path d="M.2 6.400V2.900l2.750-2.700L5.700 2.900v3.500z" fill="#2b4760"/></svg><span class="t" style="left:343.5px;top:357px;font-size:9.4px;line-height:12.2px;color:#4d6479;transform:scaleX(0.9566);">Tussenwoning</span><span class="t" style="left:491px;top:357px;font-size:9.4px;line-height:12.2px;color:#4d6479;transform:scaleX(0.9900);">314</span><span class="t" style="left:580.5px;top:357px;font-size:9.4px;line-height:12.2px;color:#4d6479;">12894</span><span class="t" style="left:645px;top:357px;font-size:9.4px;line-height:12.2px;color:#4d6479;transform:scaleX(0.9417);">Daniël de Bliecklaan</span><span class="t" style="left:825.3px;top:357px;font-size:9.4px;line-height:12.2px;color:#4d6479;transform:scaleX(0.9581);">6</span><span class="t" style="left:960.5px;top:357px;font-size:9.4px;line-height:12.2px;color:#4d6479;transform:scaleX(0.9742);">5622HZ</span><span class="t" style="left:1041.5px;top:357px;font-size:9.4px;line-height:12.2px;color:#4d6479;transform:scaleX(0.9478);">Eindhoven</span><div class="b" style="left:285.5px;top:376.8px;width:839.5px;height:27.19999999999999px;background:#f6f6f6;"></div><svg class="b" style="left:328.6px;top:387.19999999999993px;" width="5.2" height="6.2" viewBox="0 0 6 6.6"><path d="M.2 6.400V2.900l2.750-2.700L5.700 2.900v3.500z" fill="#2b4760"/></svg><span class="t" style="left:343.5px;top:384px;font-size:9.4px;line-height:12.2px;color:#4d6479;transform:scaleX(0.9566);">Tussenwoning</span><span class="t" style="left:491px;top:384px;font-size:9.4px;line-height:12.2px;color:#4d6479;transform:scaleX(0.9900);">314</span><span class="t" style="left:580.5px;top:384px;font-size:9.4px;line-height:12.2px;color:#4d6479;">12895</span><span class="t" style="left:645px;top:384px;font-size:9.4px;line-height:12.2px;color:#4d6479;transform:scaleX(0.9417);">Daniël de Bliecklaan</span><span class="t" style="left:825.3px;top:384px;font-size:9.4px;line-height:12.2px;color:#4d6479;transform:scaleX(0.9581);">8</span><span class="t" style="left:960.5px;top:384px;font-size:9.4px;line-height:12.2px;color:#4d6479;transform:scaleX(0.9742);">5622HZ</span><span class="t" style="left:1041.5px;top:384px;font-size:9.4px;line-height:12.2px;color:#4d6479;transform:scaleX(0.9478);">Eindhoven</span><svg class="b" style="left:328.6px;top:414.4px;" width="5.2" height="6.2" viewBox="0 0 6 6.6"><path d="M.2 6.400V2.900l2.750-2.700L5.700 2.900v3.500z" fill="#2b4760"/></svg><span class="t" style="left:343.5px;top:412px;font-size:9.4px;line-height:12.2px;color:#4d6479;transform:scaleX(0.9566);">Tussenwoning</span><span class="t" style="left:491px;top:412px;font-size:9.4px;line-height:12.2px;color:#4d6479;transform:scaleX(0.9900);">314</span><span class="t" style="left:580.5px;top:412px;font-size:9.4px;line-height:12.2px;color:#4d6479;">12896</span><span class="t" style="left:645px;top:412px;font-size:9.4px;line-height:12.2px;color:#4d6479;transform:scaleX(0.9417);">Daniël de Bliecklaan</span><span class="t" style="left:825.3px;top:412px;font-size:9.4px;line-height:12.2px;color:#4d6479;transform:scaleX(0.9581);">10</span><span class="t" style="left:960.5px;top:412px;font-size:9.4px;line-height:12.2px;color:#4d6479;transform:scaleX(0.9742);">5622HZ</span><span class="t" style="left:1041.5px;top:412px;font-size:9.4px;line-height:12.2px;color:#4d6479;transform:scaleX(0.9478);">Eindhoven</span><div class="b" style="left:285.5px;top:431.2px;width:839.5px;height:27.19999999999999px;background:#f6f6f6;"></div><svg class="b" style="left:328.6px;top:441.59999999999997px;" width="5.2" height="6.2" viewBox="0 0 6 6.6"><path d="M.2 6.400V2.900l2.750-2.700L5.700 2.900v3.500z" fill="#2b4760"/></svg><span class="t" style="left:343.5px;top:439px;font-size:9.4px;line-height:12.2px;color:#4d6479;transform:scaleX(0.9566);">Tussenwoning</span><span class="t" style="left:491px;top:439px;font-size:9.4px;line-height:12.2px;color:#4d6479;transform:scaleX(0.9900);">314</span><span class="t" style="left:580.5px;top:439px;font-size:9.4px;line-height:12.2px;color:#4d6479;">12897</span><span class="t" style="left:645px;top:439px;font-size:9.4px;line-height:12.2px;color:#4d6479;transform:scaleX(0.9417);">Daniël de Bliecklaan</span><span class="t" style="left:825.3px;top:439px;font-size:9.4px;line-height:12.2px;color:#4d6479;transform:scaleX(0.9581);">12</span><span class="t" style="left:960.5px;top:439px;font-size:9.4px;line-height:12.2px;color:#4d6479;transform:scaleX(0.9742);">5622HZ</span><span class="t" style="left:1041.5px;top:439px;font-size:9.4px;line-height:12.2px;color:#4d6479;transform:scaleX(0.9478);">Eindhoven</span><svg class="b" style="left:328.6px;top:468.79999999999995px;" width="5.2" height="6.2" viewBox="0 0 6 6.6"><path d="M.2 6.400V2.900l2.750-2.700L5.700 2.900v3.500z" fill="#2b4760"/></svg><span class="t" style="left:343.5px;top:466px;font-size:9.4px;line-height:12.2px;color:#4d6479;transform:scaleX(0.9566);">Tussenwoning</span><span class="t" style="left:491px;top:466px;font-size:9.4px;line-height:12.2px;color:#4d6479;transform:scaleX(0.9900);">314</span><span class="t" style="left:580.5px;top:466px;font-size:9.4px;line-height:12.2px;color:#4d6479;">12898</span><span class="t" style="left:645px;top:466px;font-size:9.4px;line-height:12.2px;color:#4d6479;transform:scaleX(0.9417);">Daniël de Bliecklaan</span><span class="t" style="left:825.3px;top:466px;font-size:9.4px;line-height:12.2px;color:#4d6479;transform:scaleX(0.9581);">14</span><span class="t" style="left:960.5px;top:466px;font-size:9.4px;line-height:12.2px;color:#4d6479;transform:scaleX(0.9742);">5622HZ</span><span class="t" style="left:1041.5px;top:466px;font-size:9.4px;line-height:12.2px;color:#4d6479;transform:scaleX(0.9478);">Eindhoven</span><div class="b" style="left:285.5px;top:485.6px;width:839.5px;height:27.199999999999932px;background:#f6f6f6;"></div><svg class="b" style="left:328.6px;top:496.0px;" width="5.2" height="6.2" viewBox="0 0 6 6.6"><path d="M.2 6.400V2.900l2.750-2.700L5.700 2.900v3.500z" fill="#2b4760"/></svg><span class="t" style="left:343.5px;top:493px;font-size:9.4px;line-height:12.2px;color:#4d6479;transform:scaleX(0.9566);">Tussenwoning</span><span class="t" style="left:491px;top:493px;font-size:9.4px;line-height:12.2px;color:#4d6479;transform:scaleX(0.9900);">314</span><span class="t" style="left:580.5px;top:493px;font-size:9.4px;line-height:12.2px;color:#4d6479;">12899</span><span class="t" style="left:645px;top:493px;font-size:9.4px;line-height:12.2px;color:#4d6479;transform:scaleX(0.9417);">Daniël de Bliecklaan</span><span class="t" style="left:825.3px;top:493px;font-size:9.4px;line-height:12.2px;color:#4d6479;transform:scaleX(0.9581);">16</span><span class="t" style="left:960.5px;top:493px;font-size:9.4px;line-height:12.2px;color:#4d6479;transform:scaleX(0.9742);">5622HZ</span><span class="t" style="left:1041.5px;top:493px;font-size:9.4px;line-height:12.2px;color:#4d6479;transform:scaleX(0.9478);">Eindhoven</span><svg class="b" style="left:328.6px;top:523.1999999999999px;" width="5.2" height="6.2" viewBox="0 0 6 6.6"><path d="M.2 6.400V2.900l2.750-2.700L5.700 2.900v3.500z" fill="#2b4760"/></svg><span class="t" style="left:343.5px;top:520px;font-size:9.4px;line-height:12.2px;color:#4d6479;transform:scaleX(0.9566);">Tussenwoning</span><span class="t" style="left:491px;top:520px;font-size:9.4px;line-height:12.2px;color:#4d6479;transform:scaleX(0.9900);">314</span><span class="t" style="left:580.5px;top:520px;font-size:9.4px;line-height:12.2px;color:#4d6479;">12821</span><span class="t" style="left:645px;top:520px;font-size:9.4px;line-height:12.2px;color:#4d6479;transform:scaleX(0.9717);">Elias Boumanstraat</span><span class="t" style="left:825.3px;top:520px;font-size:9.4px;line-height:12.2px;color:#4d6479;transform:scaleX(0.9581);">4</span><span class="t" style="left:960.5px;top:520px;font-size:9.4px;line-height:12.2px;color:#4d6479;">5622KW</span><span class="t" style="left:1041.5px;top:520px;font-size:9.4px;line-height:12.2px;color:#4d6479;transform:scaleX(0.9478);">Eindhoven</span><div class="b" style="left:285.5px;top:540.0px;width:839.5px;height:27.200000000000045px;background:#f6f6f6;"></div><svg class="b" style="left:328.6px;top:550.4px;" width="5.2" height="6.2" viewBox="0 0 6 6.6"><path d="M.2 6.400V2.900l2.750-2.700L5.700 2.900v3.500z" fill="#2b4760"/></svg><span class="t" style="left:343.5px;top:548px;font-size:9.4px;line-height:12.2px;color:#4d6479;transform:scaleX(0.9566);">Tussenwoning</span><span class="t" style="left:491px;top:548px;font-size:9.4px;line-height:12.2px;color:#4d6479;transform:scaleX(0.9900);">314</span><span class="t" style="left:580.5px;top:548px;font-size:9.4px;line-height:12.2px;color:#4d6479;">12831</span><span class="t" style="left:645px;top:548px;font-size:9.4px;line-height:12.2px;color:#4d6479;transform:scaleX(0.9717);">Elias Boumanstraat</span><span class="t" style="left:825.3px;top:548px;font-size:9.4px;line-height:12.2px;color:#4d6479;transform:scaleX(0.9581);">14</span><span class="t" style="left:960.5px;top:548px;font-size:9.4px;line-height:12.2px;color:#4d6479;">5622KW</span><span class="t" style="left:1041.5px;top:548px;font-size:9.4px;line-height:12.2px;color:#4d6479;transform:scaleX(0.9478);">Eindhoven</span><svg class="b" style="left:328.6px;top:577.5999999999999px;" width="5.2" height="6.2" viewBox="0 0 6 6.6"><path d="M.2 6.400V2.900l2.750-2.700L5.700 2.900v3.500z" fill="#2b4760"/></svg><span class="t" style="left:343.5px;top:575px;font-size:9.4px;line-height:12.2px;color:#4d6479;transform:scaleX(0.9566);">Tussenwoning</span><span class="t" style="left:491px;top:575px;font-size:9.4px;line-height:12.2px;color:#4d6479;transform:scaleX(0.9900);">314</span><span class="t" style="left:580.5px;top:575px;font-size:9.4px;line-height:12.2px;color:#4d6479;">12854</span><span class="t" style="left:645px;top:575px;font-size:9.4px;line-height:12.2px;color:#4d6479;transform:scaleX(0.9717);">Elias Boumanstraat</span><span class="t" style="left:825.3px;top:575px;font-size:9.4px;line-height:12.2px;color:#4d6479;transform:scaleX(0.9581);">37</span><span class="t" style="left:960.5px;top:575px;font-size:9.4px;line-height:12.2px;color:#4d6479;">5622KV</span><span class="t" style="left:1041.5px;top:575px;font-size:9.4px;line-height:12.2px;color:#4d6479;transform:scaleX(0.9478);">Eindhoven</span><div class="b" style="left:285.5px;top:594.4px;width:839.5px;height:27.200000000000045px;background:#f6f6f6;"></div><svg class="b" style="left:328.6px;top:604.8px;" width="5.2" height="6.2" viewBox="0 0 6 6.6"><path d="M.2 6.400V2.900l2.750-2.700L5.700 2.900v3.500z" fill="#2b4760"/></svg><span class="t" style="left:343.5px;top:602px;font-size:9.4px;line-height:12.2px;color:#4d6479;transform:scaleX(0.9785);">Hoekwoning</span><span class="t" style="left:491px;top:602px;font-size:9.4px;line-height:12.2px;color:#4d6479;transform:scaleX(0.9900);">314</span><span class="t" style="left:580.5px;top:602px;font-size:9.4px;line-height:12.2px;color:#4d6479;">12769</span><span class="t" style="left:645px;top:602px;font-size:9.4px;line-height:12.2px;color:#4d6479;transform:scaleX(0.9594);">Hendrik Staetslaan</span><span class="t" style="left:825.3px;top:602px;font-size:9.4px;line-height:12.2px;color:#4d6479;transform:scaleX(0.9772);">125</span><span class="t" style="left:960.5px;top:602px;font-size:9.4px;line-height:12.2px;color:#4d6479;transform:scaleX(1.0300);">5622HM</span><span class="t" style="left:1041.5px;top:602px;font-size:9.4px;line-height:12.2px;color:#4d6479;transform:scaleX(0.9478);">Eindhoven</span><svg class="b" style="left:328.6px;top:632.0px;" width="5.2" height="6.2" viewBox="0 0 6 6.6"><path d="M.2 6.400V2.900l2.750-2.700L5.700 2.900v3.500z" fill="#2b4760"/></svg><span class="t" style="left:343.5px;top:629px;font-size:9.4px;line-height:12.2px;color:#4d6479;transform:scaleX(0.9566);">Tussenwoning</span><span class="t" style="left:491px;top:629px;font-size:9.4px;line-height:12.2px;color:#4d6479;transform:scaleX(0.9900);">314</span><span class="t" style="left:580.5px;top:629px;font-size:9.4px;line-height:12.2px;color:#4d6479;">12906</span><span class="t" style="left:645px;top:629px;font-size:9.4px;line-height:12.2px;color:#4d6479;transform:scaleX(0.9352);">Jan van den Eyndestraat</span><span class="t" style="left:825.3px;top:629px;font-size:9.4px;line-height:12.2px;color:#4d6479;transform:scaleX(0.9581);">8</span><span class="t" style="left:960.5px;top:629px;font-size:9.4px;line-height:12.2px;color:#4d6479;">5622HW</span><span class="t" style="left:1041.5px;top:629px;font-size:9.4px;line-height:12.2px;color:#4d6479;transform:scaleX(0.9478);">Eindhoven</span><div class="b" style="left:285.5px;top:648.8px;width:839.5px;height:27.200000000000045px;background:#f6f6f6;"></div><svg class="b" style="left:328.6px;top:659.1999999999999px;" width="5.2" height="6.2" viewBox="0 0 6 6.6"><path d="M.2 6.400V2.900l2.750-2.700L5.700 2.900v3.500z" fill="#2b4760"/></svg><span class="t" style="left:343.5px;top:656px;font-size:9.4px;line-height:12.2px;color:#4d6479;transform:scaleX(0.9566);">Tussenwoning</span><span class="t" style="left:491px;top:656px;font-size:9.4px;line-height:12.2px;color:#4d6479;transform:scaleX(0.9900);">314</span><span class="t" style="left:580.5px;top:656px;font-size:9.4px;line-height:12.2px;color:#4d6479;transform:scaleX(1.0246);">12911</span><span class="t" style="left:645px;top:656px;font-size:9.4px;line-height:12.2px;color:#4d6479;transform:scaleX(0.9352);">Jan van den Eyndestraat</span><span class="t" style="left:825.3px;top:656px;font-size:9.4px;line-height:12.2px;color:#4d6479;transform:scaleX(0.9581);">18</span><span class="t" style="left:960.5px;top:656px;font-size:9.4px;line-height:12.2px;color:#4d6479;">5622HW</span><span class="t" style="left:1041.5px;top:656px;font-size:9.4px;line-height:12.2px;color:#4d6479;transform:scaleX(0.9478);">Eindhoven</span><svg class="b" style="left:328.6px;top:686.4px;" width="5.2" height="6.2" viewBox="0 0 6 6.6"><path d="M.2 6.400V2.900l2.750-2.700L5.700 2.900v3.500z" fill="#2b4760"/></svg><span class="t" style="left:343.5px;top:684px;font-size:9.4px;line-height:12.2px;color:#4d6479;transform:scaleX(0.9785);">Hoekwoning</span><span class="t" style="left:491px;top:684px;font-size:9.4px;line-height:12.2px;color:#4d6479;transform:scaleX(0.9900);">314</span><span class="t" style="left:580.5px;top:684px;font-size:9.4px;line-height:12.2px;color:#4d6479;">12771</span><span class="t" style="left:645px;top:684px;font-size:9.4px;line-height:12.2px;color:#4d6479;transform:scaleX(0.9897);">Rijckwaertstraat</span><span class="t" style="left:825.3px;top:684px;font-size:9.4px;line-height:12.2px;color:#4d6479;transform:scaleX(0.9581);">2</span><span class="t" style="left:960.5px;top:684px;font-size:9.4px;line-height:12.2px;color:#4d6479;transform:scaleX(0.9885);">5622HV</span><span class="t" style="left:1041.5px;top:684px;font-size:9.4px;line-height:12.2px;color:#4d6479;transform:scaleX(0.9478);">Eindhoven</span><div class="b" style="left:285.5px;top:703.2px;width:839.5px;height:27.199999999999932px;background:#f6f6f6;"></div><svg class="b" style="left:328.6px;top:713.5999999999999px;" width="5.2" height="6.2" viewBox="0 0 6 6.6"><path d="M.2 6.400V2.900l2.750-2.700L5.700 2.900v3.500z" fill="#2b4760"/></svg><span class="t" style="left:343.5px;top:711px;font-size:9.4px;line-height:12.2px;color:#4d6479;transform:scaleX(0.9785);">Hoekwoning</span><span class="t" style="left:491px;top:711px;font-size:9.4px;line-height:12.2px;color:#4d6479;transform:scaleX(0.9900);">314</span><span class="t" style="left:580.5px;top:711px;font-size:9.4px;line-height:12.2px;color:#4d6479;">12788</span><span class="t" style="left:645px;top:711px;font-size:9.4px;line-height:12.2px;color:#4d6479;transform:scaleX(0.9897);">Rijckwaertstraat</span><span class="t" style="left:825.3px;top:711px;font-size:9.4px;line-height:12.2px;color:#4d6479;transform:scaleX(0.9581);">19</span><span class="t" style="left:960.5px;top:711px;font-size:9.4px;line-height:12.2px;color:#4d6479;transform:scaleX(0.9742);">5622HT</span><span class="t" style="left:1041.5px;top:711px;font-size:9.4px;line-height:12.2px;color:#4d6479;transform:scaleX(0.9478);">Eindhoven</span><svg class="b" style="left:328.6px;top:740.8px;" width="5.2" height="6.2" viewBox="0 0 6 6.6"><path d="M.2 6.400V2.900l2.750-2.700L5.700 2.900v3.500z" fill="#2b4760"/></svg><span class="t" style="left:343.5px;top:738px;font-size:9.4px;line-height:12.2px;color:#4d6479;transform:scaleX(0.9566);">Tussenwoning</span><span class="t" style="left:491px;top:738px;font-size:9.4px;line-height:12.2px;color:#4d6479;transform:scaleX(0.9900);">314</span><span class="t" style="left:580.5px;top:738px;font-size:9.4px;line-height:12.2px;color:#4d6479;">12796</span><span class="t" style="left:645px;top:738px;font-size:9.4px;line-height:12.2px;color:#4d6479;transform:scaleX(0.9897);">Rijckwaertstraat</span><span class="t" style="left:825.3px;top:738px;font-size:9.4px;line-height:12.2px;color:#4d6479;transform:scaleX(0.9581);">27</span><span class="t" style="left:960.5px;top:738px;font-size:9.4px;line-height:12.2px;color:#4d6479;transform:scaleX(0.9742);">5622HT</span><span class="t" style="left:1041.5px;top:738px;font-size:9.4px;line-height:12.2px;color:#4d6479;transform:scaleX(0.9478);">Eindhoven</span><div class="b" style="left:285.5px;top:757.6px;width:839.5px;height:27.199999999999932px;background:#f6f6f6;"></div><svg class="b" style="left:328.6px;top:768.0px;" width="5.2" height="6.2" viewBox="0 0 6 6.6"><path d="M.2 6.400V2.900l2.750-2.700L5.700 2.900v3.500z" fill="#2b4760"/></svg><span class="t" style="left:343.5px;top:765px;font-size:9.4px;line-height:12.2px;color:#4d6479;transform:scaleX(0.9785);">Hoekwoning</span><span class="t" style="left:491px;top:765px;font-size:9.4px;line-height:12.2px;color:#4d6479;transform:scaleX(0.9900);">314</span><span class="t" style="left:580.5px;top:765px;font-size:9.4px;line-height:12.2px;color:#4d6479;">12945</span><span class="t" style="left:645px;top:765px;font-size:9.4px;line-height:12.2px;color:#4d6479;transform:scaleX(0.9849);">Springerstraat</span><span class="t" style="left:825.3px;top:765px;font-size:9.4px;line-height:12.2px;color:#4d6479;transform:scaleX(0.9581);">22</span><span class="t" style="left:960.5px;top:765px;font-size:9.4px;line-height:12.2px;color:#4d6479;transform:scaleX(0.9450);">5622GR</span><span class="t" style="left:1041.5px;top:765px;font-size:9.4px;line-height:12.2px;color:#4d6479;transform:scaleX(0.9478);">Eindhoven</span><div class="b" style="left:1138.6px;top:172.5px;width:12.400000000000091px;height:613.5px;background:#f3f3f3;"></div><div class="b" style="left:1140.3px;top:186.2px;width:9.400000000000091px;height:550.8px;background:#c1c1c1;"></div><svg class="b" style="left:1142px;top:178.2px;" width="5.6" height="3.2" viewBox="0 0 7 4"><path d="M.3 3.800L3.500.4l3.200 3.400z" fill="#9a9a9a"/></svg><svg class="b" style="left:1142.2px;top:778px;" width="5.6" height="3.2" viewBox="0 0 7 4"><path d="M.3.200L3.500 3.600 6.700.2z" fill="#4a4a4a"/></svg><div class="b" style="left:1152px;top:172.5px;width:10px;height:613.5px;background:#f7f7f7;border-left:1px solid #ececec;border-right:1px solid #e3e3e3;"></div><svg class="b" style="left:1153.5px;top:473.8px;" width="5.7" height="8.4" viewBox="0 0 5.70 8.40"><path d="M1.200 1l3.20 3.20-3.20 3.20" fill="none" stroke="#2b4760" stroke-width="1.5" stroke-linecap="round" stroke-linejoin="round"/></svg></div><div class="g" id="details"><span class="t" style="left:1175.5px;top:179px;font-size:9.2px;line-height:12.0px;color:#2b4760;font-weight:700;transform:scaleX(0.8000);">Overzicht</span><span class="t" style="left:1235.5px;top:179px;font-size:9.2px;line-height:12.0px;color:#4d6479;transform:scaleX(0.8478);">Ruimte en</span><span class="t" style="left:1236.5px;top:188px;font-size:9.2px;line-height:12.0px;color:#4d6479;transform:scaleX(0.8408);">oppervlak</span><span class="t" style="left:1295px;top:179px;font-size:9.2px;line-height:12.0px;color:#4d6479;transform:scaleX(0.8577);">Bouwdelen</span><span class="t" style="left:1358.5px;top:179px;font-size:9.2px;line-height:12.0px;color:#4d6479;transform:scaleX(0.8548);">Output en</span><span class="t" style="left:1361.5px;top:188px;font-size:9.2px;line-height:12.0px;color:#4d6479;transform:scaleX(0.8452);">bronnen</span><div class="b" style="left:1162px;top:204.5px;width:61px;height:2.5px;background:#2b4760;"></div><div class="b" style="left:1168.5px;top:214px;width:262.5px;height:153.5px;background:#dcdcdc;border:1px solid #858585;border-radius:3.500px;"></div><svg class="b" style="left:1168.5px;top:214px;" width="263" height="154" viewBox="1168.500 214 263 154"><defs><pattern id="pyb" width="6" height="2.200" patternUnits="userSpaceOnUse"><rect width="6" height="2.200" fill="#a8924f"/><rect y="1.800" width="6" height=".4" fill="#8c7a42"/><rect x="1" width="1.500" height="1.800" fill="#b5a05c"/><rect x="4" width="1" height="1.800" fill="#9b8647"/></pattern><pattern id="prb" width="5" height="2.200" patternUnits="userSpaceOnUse"><rect width="5" height="2.200" fill="#884939"/><rect y="1.800" width="5" height=".4" fill="#9a6a5c"/><rect x="2.400" width=".4" height="1.800" fill="#9a6a5c"/></pattern><pattern id="prf" width="3" height="3.300" patternUnits="userSpaceOnUse"><rect width="3" height="3.300" fill="#515151"/><rect y="2.900" width="3" height=".4" fill="#383838"/><rect x="2.600" width=".4" height="3.300" fill="#434343"/></pattern></defs><rect x="1252" y="224.5" width="6.80" height="11.50" fill="#b39b58"/><rect x="1338.3" y="224.5" width="6.50" height="11.50" fill="#b39b58"/><rect x="1252" y="224.5" width="6.80" height="1.50" fill="#8f7c48"/><rect x="1338.3" y="224.5" width="6.50" height="1.50" fill="#8f7c48"/><path d="M1250.500 232h93.800l3.900 40.500h-99z" fill="url(#prf)"/><path d="M1249.200 270.500h99l.1 3h-99.200z" fill="#2a2a2a"/><rect x="1249.3" y="273.5" width="98.20" height="47.50" fill="url(#pyb)"/><rect x="1249.3" y="282.2" width="98.20" height="0.90" fill="#a5a08d"/><rect x="1249.3" y="291" width="98.20" height="0.90" fill="#a5a08d"/><rect x="1249.3" y="299.7" width="98.20" height="0.90" fill="#a5a08d"/><rect x="1249.3" y="306.8" width="98.20" height="0.90" fill="#a5a08d"/><rect x="1249.3" y="313.8" width="98.20" height="0.90" fill="#a5a08d"/><rect x="1267.5" y="279" width="26.00" height="22.50" fill="#ecebe6"/><rect x="1269.5" y="281.2" width="9.80" height="18.30" fill="#2b2d2e"/><rect x="1281.3" y="281.2" width="10.20" height="18.30" fill="#2b2d2e"/><rect x="1314" y="273.5" width="31.00" height="8.30" fill="#ecebe6"/><rect x="1316" y="275" width="13.50" height="5.30" fill="#2b2d2e"/><rect x="1331.5" y="275" width="12.00" height="5.30" fill="#2b2d2e"/><rect x="1249.3" y="321" width="65.20" height="36.50" fill="url(#prb)"/><rect x="1258" y="321" width="41.50" height="25.00" fill="#ecebe6"/><rect x="1260" y="323" width="8.50" height="21.00" fill="#2b2d2e"/><rect x="1270.3" y="323" width="27.20" height="21.00" fill="#8d8f8f"/><rect x="1287.5" y="323" width="1.00" height="21.00" fill="#dcdcd8"/><rect x="1270.3" y="323" width="27.20" height="1.80" fill="#55595a"/><rect x="1314.5" y="321" width="16.50" height="36.50" fill="#d8c699"/><rect x="1316" y="322" width="13.50" height="35.50" fill="#e8d5a4"/><rect x="1321.3" y="326" width="1.70" height="13.00" fill="#2a2a2a"/><rect x="1331" y="321" width="16.50" height="8.00" fill="#ecebe6"/><rect x="1333.5" y="322.3" width="9.50" height="4.20" fill="#2b2d2e"/><rect x="1331" y="329" width="16.50" height="28.50" fill="url(#pyb)"/></svg><div class="b" style="left:1183px;top:275.75px;width:20px;height:20.0px;background:rgba(255,255,255,.38);border-radius:50%;"></div><svg class="b" style="left:1189.3px;top:280.75px;" width="6.5" height="10" viewBox="0 0 6.50 10.00"><path d="M5.20 1l-4.00 4.00 4.00 4.00" fill="none" stroke="#a8b0b8" stroke-width="1.2" stroke-linecap="round" stroke-linejoin="round"/></svg><div class="b" style="left:1396px;top:275.75px;width:20px;height:20.0px;background:#fff;border-radius:50%;"></div><svg class="b" style="left:1403.6px;top:280.75px;" width="6.5" height="10" viewBox="0 0 6.50 10.00"><path d="M1.200 1l4.00 4.00-4.00 4.00" fill="none" stroke="#2b4760" stroke-width="1.4" stroke-linecap="round" stroke-linejoin="round"/></svg><div class="b" style="left:1162px;top:375px;width:275.70000000000005px;height:1px;background:#e4e4e4;"></div><span class="t" style="left:1172px;top:382px;font-size:9.4px;line-height:12.2px;color:#2b4760;font-weight:700;transform:scaleX(0.8934);">Basisgegevens</span><svg class="b" style="left:1422.2px;top:384.0px;" width="5.8" height="8.6" viewBox="0 0 5.80 8.60"><path d="M1.200 1l3.30 3.30-3.30 3.30" fill="none" stroke="#2b4760" stroke-width="1.7" stroke-linecap="round" stroke-linejoin="round"/></svg><div class="b" style="left:1162px;top:402.1px;width:275.70000000000005px;height:1.0px;background:#e4e4e4;"></div><span class="t" style="left:1172px;top:409px;font-size:9.4px;line-height:12.2px;color:#2b4760;font-weight:700;transform:scaleX(0.9054);">WWS, Label en WOZ</span><svg class="b" style="left:1420.6px;top:413.05000000000007px;" width="8.6" height="5.8" viewBox="0 0 8.60 5.80"><path d="M1 1.200l3.30 3.30 3.30-3.30" fill="none" stroke="#2b4760" stroke-width="1.7" stroke-linecap="round" stroke-linejoin="round"/></svg><div class="b" style="left:1162px;top:429.3px;width:275.70000000000005px;height:1.0px;background:#e4e4e4;"></div><span class="t" style="left:1175px;top:437px;font-size:9.4px;line-height:12.2px;color:#2b4760;font-weight:700;transform:scaleX(0.9602);">WWS</span><svg class="b" style="left:1422.2px;top:438.3px;" width="5.8" height="8.6" viewBox="0 0 5.80 8.60"><path d="M1.200 1l3.30 3.30-3.30 3.30" fill="none" stroke="#2b4760" stroke-width="1.7" stroke-linecap="round" stroke-linejoin="round"/></svg><div class="b" style="left:1162px;top:456.4px;width:275.70000000000005px;height:1.0px;background:#e4e4e4;"></div><span class="t" style="left:1175px;top:464px;font-size:9.4px;line-height:12.2px;color:#2b4760;font-weight:700;transform:scaleX(0.8945);">Energie Label</span><svg class="b" style="left:1420.6px;top:467.35px;" width="8.6" height="5.8" viewBox="0 0 8.60 5.80"><path d="M1 1.200l3.30 3.30 3.30-3.30" fill="none" stroke="#2b4760" stroke-width="1.7" stroke-linecap="round" stroke-linejoin="round"/></svg><div class="b" style="left:1162px;top:483.6px;width:275.70000000000005px;height:1.0px;background:#e4e4e4;"></div><span class="t" style="left:1175px;top:491px;font-size:7.8px;line-height:10.1px;color:#868686;transform:scaleX(0.9795);">Afgemeld energielabel</span><span class="t" style="left:1175px;top:506px;font-size:10.0px;line-height:13.0px;color:#4a6b88;transform:scaleX(0.7494);">E</span><div class="b" style="left:1162px;top:524.4px;width:275.70000000000005px;height:1.0px;background:#e4e4e4;"></div><span class="t" style="left:1175px;top:531px;font-size:7.8px;line-height:10.1px;color:#868686;transform:scaleX(0.9943);">Registratiedatum energielabel</span><span class="t" style="left:1175px;top:547px;font-size:10.0px;line-height:13.0px;color:#4a6b88;">15-09-2017</span><div class="b" style="left:1162px;top:565.2px;width:275.70000000000005px;height:1.0px;background:#e4e4e4;"></div><span class="t" style="left:1175px;top:572px;font-size:7.8px;line-height:10.1px;color:#868686;transform:scaleX(0.9778);">Actueel berekend energielabel</span><span class="t" style="left:1175px;top:588px;font-size:10.0px;line-height:13.0px;color:#4a6b88;transform:scaleX(0.8294);">D</span><div class="b" style="left:1162px;top:606.0px;width:275.70000000000005px;height:1.0px;background:#e4e4e4;"></div><span class="t" style="left:1175px;top:613px;font-size:7.8px;line-height:10.1px;color:#868686;transform:scaleX(0.9836);">Actueel berekend Beng1 (Kwh/Jaar/M2)</span><span class="t" style="left:1175px;top:628px;font-size:10.0px;line-height:13.0px;color:#4a6b88;transform:scaleX(0.9388);">154,6</span><div class="b" style="left:1162px;top:646.8px;width:275.70000000000005px;height:1.0px;background:#e4e4e4;"></div><span class="t" style="left:1175px;top:654px;font-size:7.8px;line-height:10.1px;color:#868686;transform:scaleX(0.9836);">Actueel berekend Beng2 (Kwh/Jaar/M2)</span><span class="t" style="left:1175px;top:669px;font-size:10.0px;line-height:13.0px;color:#4a6b88;transform:scaleX(0.9388);">261,6</span><div class="b" style="left:1162px;top:687.6px;width:275.70000000000005px;height:1.0px;background:#e4e4e4;"></div><span class="t" style="left:1175px;top:695px;font-size:7.8px;line-height:10.1px;color:#868686;transform:scaleX(0.9428);">Actueel berekend Beng3 (%)</span><span class="t" style="left:1175px;top:710px;font-size:10.0px;line-height:13.0px;color:#4a6b88;transform:scaleX(1.0787);">0</span><div class="b" style="left:1162px;top:728.4px;width:275.70000000000005px;height:1.0px;background:#e4e4e4;"></div><span class="t" style="left:1175px;top:735px;font-size:7.8px;line-height:10.1px;color:#868686;transform:scaleX(0.9932);">Actueel berekend Aansluitvermogen</span><span class="t" style="left:1175px;top:751px;font-size:10.0px;line-height:13.0px;color:#4a6b88;transform:scaleX(0.9590);">10583,26017657765</span><div class="b" style="left:1162px;top:769.2px;width:275.70000000000005px;height:1.0px;background:#e4e4e4;"></div><span class="t" style="left:1175px;top:776px;font-size:7.8px;line-height:10.1px;color:#868686;transform:scaleX(0.9494);">Gas (M3) per jaar</span><div class="b" style="left:1437.7px;top:207.2px;width:12.399999999999864px;height:578.8px;background:#f3f3f3;"></div><div class="b" style="left:1438.9px;top:220px;width:10.0px;height:241.5px;background:#c1c1c1;"></div><svg class="b" style="left:1441.4px;top:212.2px;" width="5.6" height="3.2" viewBox="0 0 7 4"><path d="M.3 3.800L3.500.4l3.200 3.400z" fill="#9a9a9a"/></svg><svg class="b" style="left:1441.4px;top:778px;" width="5.6" height="3.2" viewBox="0 0 7 4"><path d="M.3.200L3.500 3.600 6.700.2z" fill="#4a4a4a"/></svg></div><div class="b" style="left:0px;top:91px;width:1px;height:695px;background:#dfe6ee;"></div><div class="b" style="left:0px;top:785.7px;width:1452px;height:3.2999999999999545px;background:#151515;"></div>
</body></html>
